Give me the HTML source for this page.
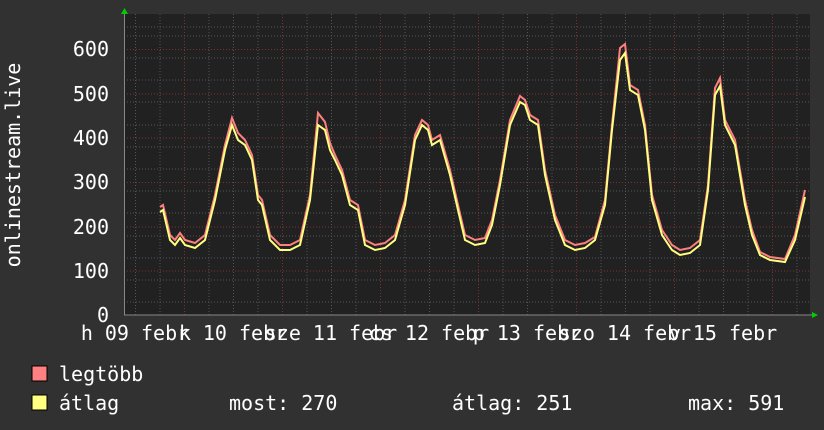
<!DOCTYPE html>
<html><head><style>
html,body{margin:0;padding:0;background:#313131;}
svg{display:block;font-family:"DejaVu Sans Mono","Liberation Mono",monospace;}
</style></head><body>
<svg width="824" height="430" xmlns="http://www.w3.org/2000/svg">
<rect width="824" height="430" fill="#313131"/>
<rect x="124" y="14" width="686" height="301" fill="#212121"/>
<g stroke="#555" stroke-width="1" stroke-dasharray="1,2">
<path d="M124 36H810M124 58H810M124 80H810M124 102H810M124 125H810M124 147H810M124 169H810M124 191H810M124 213H810M124 236H810M124 258H810M124 280H810M124 302H810M124 27H810"/>
<path d="M135.5 14V315M160 14V315M209 14V315M233.5 14V315M258 14V315M307 14V315M331.5 14V315M356 14V315M405 14V315M429.5 14V315M454 14V315M503 14V315M527.5 14V315M552 14V315M601 14V315M625.5 14V315M650 14V315M699 14V315M723.5 14V315M748 14V315M797 14V315"/>
</g>
<g stroke="#7a3333" stroke-width="1" stroke-dasharray="1,2">
<path d="M124 49.5H810M124 94H810M124 138H810M124 182.5H810M124 227H810M124 271H810"/>
<path d="M184.5 14V315M282.5 14V315M380.5 14V315M478.5 14V315M576.5 14V315M674.5 14V315M772.5 14V315"/>
</g>
<line x1="124" y1="315" x2="816" y2="315" stroke="#888"/>
<line x1="124.5" y1="10" x2="124.5" y2="315" stroke="#888"/>
<polygon points="121,14 124.5,8 128,14" fill="#00cc00"/>
<polygon points="812,312 818,315 812,318" fill="#00cc00"/>
<polyline fill="none" stroke="#ff8080" stroke-width="2" points="160,207 163,205 170,235 175,240 180,233 185,240 195,243 205,235 215,195 225,145 232,118 238,133 245,140 252,155 258,195 262,200 270,235 280,245 290,245 300,240 310,195 318,113 325,122 330,143 335,155 342,170 350,200 358,205 365,240 375,245 385,243 395,235 405,200 415,135 422,120 428,125 432,140 440,135 450,170 458,205 465,235 475,240 485,238 492,220 500,180 510,120 520,96 525,100 530,115 538,120 545,170 555,215 565,240 575,245 585,243 595,237 605,200 612,125 620,48 625,44 630,85 638,90 645,125 652,195 662,230 672,245 680,250 690,248 700,240 708,185 715,88 720,78 725,120 735,140 745,200 752,230 760,252 770,257 785,259 795,235 805,190"/>
<polyline fill="none" stroke="#ffff80" stroke-width="2" points="160,212 163,210 170,240 175,245 180,238 185,245 195,248 205,240 215,200 225,150 232,125 238,140 245,145 252,160 258,200 262,205 270,240 280,250 290,250 300,245 310,200 318,125 325,130 330,150 335,160 342,175 350,205 358,210 365,245 375,250 385,248 395,240 405,205 415,140 422,125 428,130 432,145 440,140 450,175 458,210 465,240 475,245 485,243 492,225 500,185 510,125 520,102 525,105 530,120 538,125 545,175 555,220 565,245 575,250 585,248 595,240 605,205 612,130 620,60 625,53 630,90 638,95 645,130 652,200 662,235 672,250 680,255 690,253 700,245 708,190 715,95 720,86 725,125 735,145 745,205 752,235 760,255 770,260 785,262 795,240 805,197"/>
<g fill="#fff" font-size="20" text-anchor="end">
<text x="109" y="56">600</text><text x="109" y="101">500</text><text x="109" y="145">400</text>
<text x="109" y="189">300</text><text x="109" y="234">200</text><text x="109" y="278">100</text><text x="109" y="322">0</text>
</g>
<text transform="translate(20,165) rotate(-90)" fill="#fff" font-size="20" text-anchor="middle">onlinestream.live</text>
<g fill="#fff" font-size="20" text-anchor="middle">
<text x="135" y="340">h 09 febr</text><text x="233" y="340">k 10 febr</text><text x="331" y="340">sze 11 febr</text>
<text x="429" y="340">cs 12 febr</text><text x="527" y="340">p 13 febr</text><text x="625" y="340">szo 14 febr</text>
<text x="723" y="340">v 15 febr</text>
</g>
<rect x="32" y="366" width="15" height="15" fill="#ff8080" stroke="#000"/>
<rect x="32" y="395" width="15" height="15" fill="#ffff80" stroke="#000"/>
<g fill="#fff" font-size="20">
<text x="59" y="381">legtöbb</text>
<text x="59" y="410">átlag</text>
<text x="229" y="410">most: 270</text>
<text x="452" y="410">átlag: 251</text>
<text x="688" y="410">max: 591</text>
</g>
</svg>
</body></html>
